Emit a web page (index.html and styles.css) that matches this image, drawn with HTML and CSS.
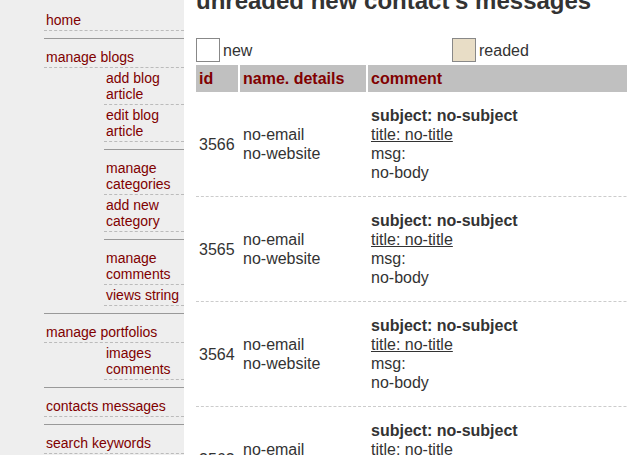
FILE: index.html
```html
<!DOCTYPE html>
<html>
<head>
<meta charset="utf-8">
<link rel="stylesheet" href="styles.css">
</head>
<body>
<div class="page">
  <aside class="sidebar">
    <ul class="nav">
      <li class="group"><a class="item" href="#">home</a></li>
      <li class="group">
        <a class="item" href="#">manage blogs</a>
        <ul class="sub">
          <li class="subgroup"><a class="item" href="#">add blog article</a><a class="item" href="#">edit blog article</a></li>
          <li class="subgroup"><a class="item" href="#">manage categories</a><a class="item" href="#">add new category</a></li>
          <li class="subgroup"><a class="item" href="#">manage comments</a><a class="item" href="#">views string</a></li>
        </ul>
      </li>
      <li class="group">
        <a class="item" href="#">manage portfolios</a>
        <ul class="sub">
          <li class="subgroup"><a class="item" href="#">images comments</a></li>
        </ul>
      </li>
      <li class="group"><a class="item" href="#">contacts messages</a></li>
      <li class="group"><a class="item" href="#">search keywords</a></li>
    </ul>
  </aside>
  <main class="content">
    <h1 class="title">unreaded new contact's messages</h1>
    <div class="legend">
      <div class="legend-item"><span class="swatch swatch-new"></span>new</div>
      <div class="legend-item"><span class="swatch swatch-read"></span>readed</div>
    </div>
    <table class="messages">
      <colgroup><col class="c-id"><col class="c-name"><col class="c-comment"></colgroup>
      <thead>
        <tr><th>id</th><th>name. details</th><th>comment</th></tr>
      </thead>
      <tbody>
        <tr>
          <td>3566</td>
          <td>no-email<br>no-website</td>
          <td><div class="subject">subject: no-subject</div><a class="msg-title" href="#">title: no-title</a><div>msg:</div><div>no-body</div></td>
        </tr>
        <tr>
          <td>3565</td>
          <td>no-email<br>no-website</td>
          <td><div class="subject">subject: no-subject</div><a class="msg-title" href="#">title: no-title</a><div>msg:</div><div>no-body</div></td>
        </tr>
        <tr>
          <td>3564</td>
          <td>no-email<br>no-website</td>
          <td><div class="subject">subject: no-subject</div><a class="msg-title" href="#">title: no-title</a><div>msg:</div><div>no-body</div></td>
        </tr>
        <tr>
          <td>3563</td>
          <td>no-email<br>no-website</td>
          <td><div class="subject">subject: no-subject</div><a class="msg-title" href="#">title: no-title</a><div>msg:</div><div>no-body</div></td>
        </tr>
      </tbody>
    </table>
  </main>
</div>
</body>
</html>
```
FILE: styles.css
```css
html, body {
  margin: 0;
  padding: 0;
  overflow: hidden;
  background: #fff;
  font-family: "Liberation Sans", Arial, sans-serif;
  color: #333;
}
.page {
  display: flex;
  min-height: 455px;
}
.sidebar {
  width: 184px;
  flex: none;
  background: #eeeeee;
  padding-top: 10px;
}
.nav, .sub {
  list-style: none;
  margin: 0;
  padding: 0;
}
.nav {
  margin-left: 44px;
}
.sub {
  margin-left: 60px;
}
.group {
  padding-bottom: 7px;
  border-bottom: 1px solid #999;
  margin-bottom: 8px;
}
.subgroup {
  padding-bottom: 7px;
  border-bottom: 1px solid #999;
  margin-bottom: 8px;
}
.subgroup:last-child {
  padding-bottom: 0;
  border-bottom: none;
  margin-bottom: 0;
}
.item {
  display: block;
  padding: 2px 2px;
  font-size: 14px;
  line-height: 16px;
  color: #800000;
  text-decoration: none;
  border-bottom: 1px dashed #bbb;
}
.content {
  flex: 1;
  padding-left: 12px;
  min-width: 0;
}
.title {
  margin: -13px 0 23px;
  font-size: 24px;
  line-height: 28px;
  font-weight: bold;
  color: #333;
  white-space: nowrap;
}
.legend {
  display: grid;
  grid-template-columns: 256px 256px;
  margin-bottom: 3px;
}
.legend-item {
  display: flex;
  align-items: center;
  gap: 3px;
  font-size: 16px;
  line-height: 19px;
  color: #333;
}
.swatch {
  width: 22px;
  height: 22px;
  border: 1px solid #888;
}
.swatch-new { background: #fff; }
.swatch-read { background: #e8ddc6; }
.messages {
  border-collapse: separate;
  border-spacing: 2px 0;
  margin-left: -2px;
  width: 700px;
  table-layout: fixed;
  font-size: 16px;
  line-height: 19px;
}
.c-id { width: 42px; }
.c-name { width: 126px; }
.messages th {
  background: #c0c0c0;
  color: #800000;
  font-weight: bold;
  text-align: left;
  padding: 4px 3px;
}
.messages td {
  padding: 14px 3px;
  vertical-align: middle;
  border-bottom: 1px dashed #ccc;
  color: #333;
}
.subject {
  font-weight: bold;
}
.msg-title {
  color: #333;
  text-decoration: underline;
}
```
